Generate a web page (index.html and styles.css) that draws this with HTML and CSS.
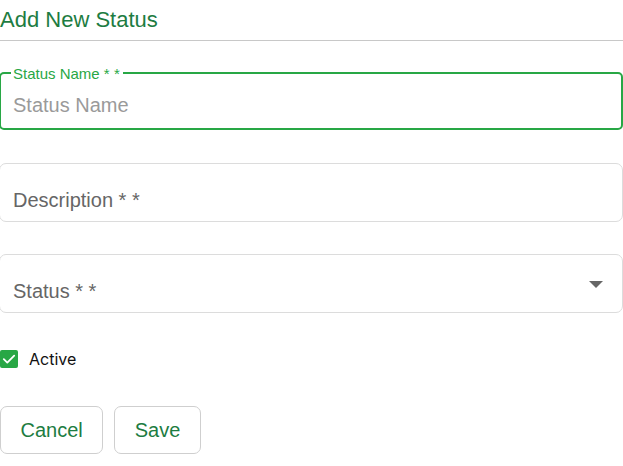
FILE: index.html
```html
<!DOCTYPE html>
<html>
<head>
<meta charset="utf-8">
<link rel="stylesheet" href="styles.css">
</head>
<body>
<div class="dialog">
  <div class="header"><h2 class="title">Add New Status</h2></div>
  <div class="form">
    <div class="field field-focus">
      <span class="float-label">Status Name * *</span>
      <span class="placeholder">Status Name</span>
    </div>
    <div class="field">
      <span class="field-text">Description * *</span>
    </div>
    <div class="field field-select">
      <span class="field-text">Status * *</span>
      <span class="arrow"></span>
    </div>
    <label class="check-row">
      <span class="checkbox">
        <svg width="18" height="18" viewBox="0 0 18 18"><path d="M3.8 9.2 L7.3 12.6 L14.2 5.6" fill="none" stroke="#fff" stroke-width="1.8" stroke-linecap="round" stroke-linejoin="round"/></svg>
      </span>
      <span class="check-label">Active</span>
    </label>
    <div class="actions">
      <button class="btn">Cancel</button>
      <button class="btn">Save</button>
    </div>
  </div>
</div>
</body>
</html>
```
FILE: styles.css
```css
html, body {
  margin: 0;
  padding: 0;
  background: #fff;
}
body {
  font-family: "Liberation Sans", Arial, sans-serif;
  overflow: hidden;
}
.dialog {
  width: 624px;
  margin-left: -1px;
}
.header {
  height: 33px;
  padding-top: 7px;
  border-bottom: 1px solid #c8c8c8;
  padding-left: 1px;
}
.title {
  margin: 0;
  font-size: 22px;
  line-height: 25px;
  font-weight: normal;
  color: #1d7c42;
}
.form {
  display: flex;
  flex-direction: column;
  padding-top: 31px;
}
.field {
  position: relative;
  box-sizing: border-box;
  height: 59px;
  border: 1px solid #dcdcdc;
  border-radius: 7px;
  padding: 24px 13px 0 13px;
  margin-bottom: 32px;
  display: flex;
  align-items: flex-start;
}
.field-focus {
  border: 2px solid #28a745;
  border-radius: 5px;
  padding: 19px 13px 0 12px;
  height: 58px;
  margin-bottom: 33px;
}
.float-label {
  position: absolute;
  top: -9px;
  left: 10px;
  padding: 0 3px 0 2px;
  background: #fff;
  color: #28a745;
  font-size: 15px;
  line-height: 18px;
}
.placeholder {
  font-size: 20px;
  line-height: 24px;
  color: #9a9a9a;
}
.field-text {
  font-size: 20px;
  line-height: 24px;
  color: #666;
}
.field-select {
  justify-content: space-between;
  margin-bottom: 37px;
}
.arrow {
  width: 0;
  height: 0;
  margin-top: 2px;
  margin-right: 6px;
  border-left: 7px solid transparent;
  border-right: 7px solid transparent;
  border-top: 7px solid #666;
}
.check-row {
  display: flex;
  align-items: center;
  gap: 11px;
  padding-left: 1px;
  height: 18px;
}
.checkbox {
  width: 18px;
  height: 18px;
  border-radius: 2px;
  background: #28a745;
  display: flex;
}
.check-label {
  font-family: "Inter", "DejaVu Sans", sans-serif;
  font-size: 16px;
  color: #111;
}
.actions {
  display: flex;
  gap: 11px;
  margin-top: 38px;
  padding-left: 1px;
}
.btn {
  height: 48px;
  padding: 0 19.5px;
  border: 1px solid #cfcfcf;
  border-radius: 7px;
  background: #fff;
  color: #1d7c42;
  font-family: "Liberation Sans", Arial, sans-serif;
  font-size: 20px;
}
```
